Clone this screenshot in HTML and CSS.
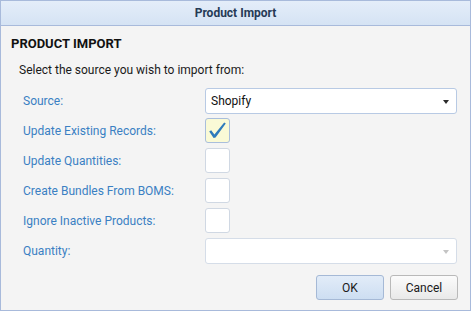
FILE: index.html
```html
<!DOCTYPE html>
<html>
<head>
<meta charset="utf-8">
<link rel="stylesheet" href="styles.css">
</head>
<body>
<div class="window">
  <div class="titlebar">Product Import</div>
  <div class="content">
    <h1 class="heading">PRODUCT IMPORT</h1>
    <p class="intro">Select the source you wish to import from:</p>
    <div class="form">
      <label class="label row-select">Source:</label>
      <div class="select row-select"><span class="value">Shopify</span><span class="arrow"></span></div>

      <label class="label row-check first">Update Existing Records:</label>
      <div class="check checked row-check first">
        <svg width="25" height="25" viewBox="0 0 25 25"><path d="M4.2 13.6 L6.2 12.2 L9.4 16.4 L19.2 4.6 L20.8 5.6 L10.6 19.6 L8.6 20 Z" fill="#2f7bbc"/></svg>
      </div>

      <label class="label row-check">Update Quantities:</label>
      <div class="check row-check"></div>

      <label class="label row-check">Create Bundles From BOMS:</label>
      <div class="check row-check"></div>

      <label class="label row-check">Ignore Inactive Products:</label>
      <div class="check row-check"></div>

      <label class="label row-qty">Quantity:</label>
      <div class="select disabled row-qty"><span class="value"></span><span class="arrow"></span></div>
    </div>
    <div class="buttons">
      <button class="btn primary">OK</button>
      <button class="btn">Cancel</button>
    </div>
  </div>
</div>
</body>
</html>
```

FILE: styles.css
```css
html, body {
  margin: 0;
  padding: 0;
  background: #ffffff;
}
body {
  font-family: Roboto, "Liberation Sans", sans-serif;
  font-size: 12px;
}
.window {
  width: 471px;
  height: 311px;
  box-sizing: border-box;
  border: 1px solid #a8badb;
  background: #f4f4f4;
  display: flex;
  flex-direction: column;
}
.titlebar {
  height: 24px;
  line-height: 24px;
  border-bottom: 1px solid #a8badb;
  background: linear-gradient(#e4edf9, #d5e3f4);
  text-align: center;
  font-weight: bold;
  font-size: 12px;
  color: #263a55;
}
.content {
  padding: 0 12px 0 10px;
  display: flex;
  flex-direction: column;
}
.heading {
  margin: 10px 0 0 0;
  font-size: 13px;
  line-height: 16px;
  font-weight: bold;
  color: #111;
}
.intro {
  margin: 10px 0 0 8px;
  line-height: 16px;
  color: #1a1a1a;
}
.form {
  margin: 10px 0 0 12px;
  display: grid;
  grid-template-columns: 182px 252px;
  column-gap: 0;
}
.label {
  color: #3a80c3;
  display: flex;
  align-items: center;
}
.row-select { height: 26px; }
.row-check { height: 25px; margin-top: 5px; }
.row-check.first { margin-top: 4px; }
.row-qty { height: 26px; margin-top: 5px; }
.select {
  box-sizing: border-box;
  border: 1px solid #b8cae4;
  border-radius: 3px;
  background: #ffffff;
  display: flex;
  align-items: center;
  justify-content: space-between;
  padding: 0 7px 0 5px;
}
.select .value {
  color: #111;
  font-size: 12px;
}
.arrow {
  width: 0;
  height: 0;
  border-left: 3px solid transparent;
  border-right: 3px solid transparent;
  border-top: 4px solid #2b2b2b;
  margin-top: 1px;
}
.select.disabled {
  border-color: #d5dde8;
}
.select.disabled .arrow {
  border-top-color: #c4c4c4;
}
.check {
  box-sizing: border-box;
  width: 25px;
  border: 1px solid #d0d8e3;
  border-radius: 3px;
  background: #ffffff;
}
.check svg {
  display: block;
  margin: -1px;
}
.check.checked {
  background: #fafad6;
  border-color: #a9bedc;
}
.buttons {
  margin-top: 11px;
  display: flex;
  justify-content: flex-end;
  gap: 6px;
}
.btn {
  width: 68px;
  height: 25px;
  box-sizing: border-box;
  border: 1px solid #b9b9b9;
  border-radius: 3px;
  background: linear-gradient(#fbfbfb, #e9e9e9);
  font-family: Roboto, "Liberation Sans", sans-serif;
  font-size: 12px;
  color: #1a1a1a;
  padding: 0;
}
.btn.primary {
  border-color: #a5b9d6;
  background: linear-gradient(#e2ecf8, #cddef2);
}
```
